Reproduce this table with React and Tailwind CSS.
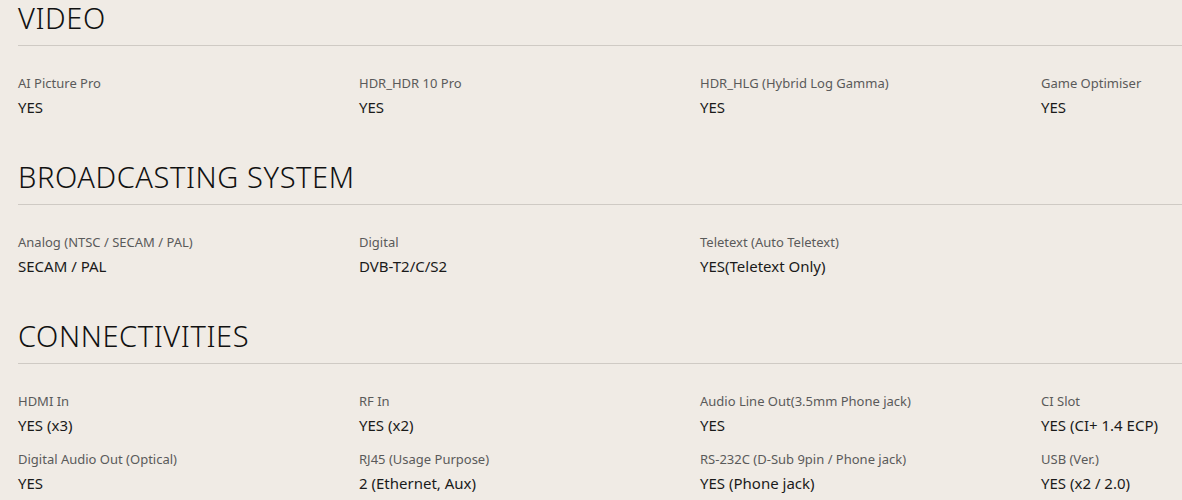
const SECTIONS = [
  {
    title: "VIDEO",
    items: [
      ["AI Picture Pro", "YES"],
      ["HDR_HDR 10 Pro", "YES"],
      ["HDR_HLG (Hybrid Log Gamma)", "YES"],
      ["Game Optimiser", "YES"],
    ],
  },
  {
    title: "BROADCASTING SYSTEM",
    items: [
      ["Analog (NTSC / SECAM / PAL)", "SECAM / PAL"],
      ["Digital", "DVB-T2/C/S2"],
      ["Teletext (Auto Teletext)", "YES(Teletext Only)"],
    ],
  },
  {
    title: "CONNECTIVITIES",
    items: [
      ["HDMI In", "YES (x3)"],
      ["RF In", "YES (x2)"],
      ["Audio Line Out(3.5mm Phone jack)", "YES"],
      ["CI Slot", "YES (CI+ 1.4 ECP)"],
      ["Digital Audio Out (Optical)", "YES"],
      ["RJ45 (Usage Purpose)", "2 (Ethernet, Aux)"],
      ["RS-232C (D-Sub 9pin / Phone jack)", "YES (Phone jack)"],
      ["USB (Ver.)", "YES (x2 / 2.0)"],
    ],
  },
];

const SpecSection = ({ title, items }) => (
  <section className="mb-[42px]">
    <h2 className="pt-[2px] text-[29px] leading-[32px] tracking-[0.6px] font-light text-[#111] pb-[11px] border-b border-[#cfcac4]">
      {title}
    </h2>
    <div className="grid grid-cols-4 gap-y-[15px] pt-[28px]">
      {items.map(([label, value]) => (
        <div key={label}>
          <p className="text-[13px] leading-[18px] text-[#5a5a5a]">{label}</p>
          <p className="mt-[5px] text-[15px] leading-[20px] text-[#1a1a1a]">{value}</p>
        </div>
      ))}
    </div>
  </section>
);

export default function App() {
  return (
    <div
      className="w-[1182px] h-[500px] overflow-hidden bg-[#f0ebe5]"
      style={{ fontFamily: '"Noto Sans", "Open Sans", sans-serif' }}
    >
      <div className="w-[1364px] ml-[18px]">
        {SECTIONS.map((s) => (
          <SpecSection key={s.title} {...s} />
        ))}
      </div>
    </div>
  );
}
